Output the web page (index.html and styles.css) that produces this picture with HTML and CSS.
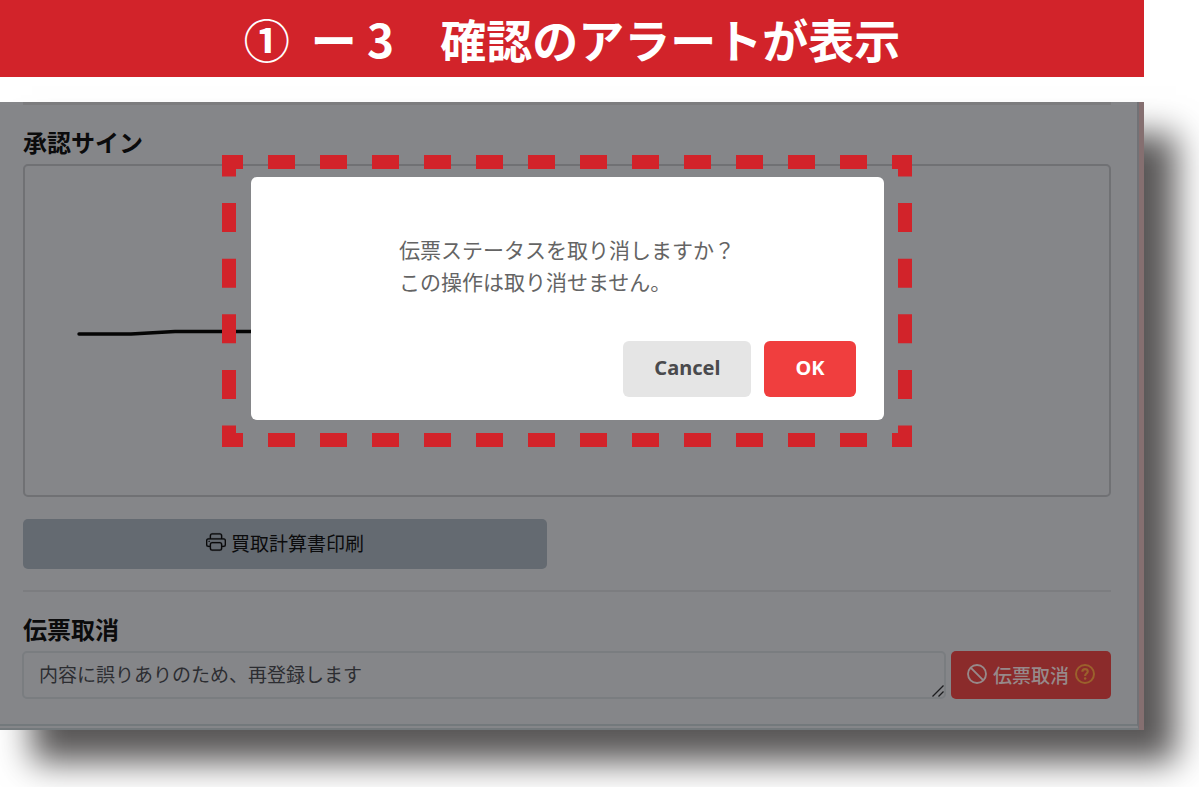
FILE: index.html
```html
<!DOCTYPE html>
<html lang="ja">
<head>
    <meta charset="UTF-8">
    <meta name="viewport" content="width=device-width, initial-scale=1.0">
    <title>確認のアラートが表示</title>
    <link rel="stylesheet" href="styles.css">
</head>
<body>
    <h1 class="banner">①&nbsp; ー 3　確認のアラートが表示</h1>
    <main class="screen">
        <div class="page">
            <div class="prev-section"></div>
            <h2 class="section-title">承認サイン</h2>
            <div class="sign-box">
                <svg class="sign" viewBox="0 0 240 12" fill="none" stroke="#050505" stroke-width="3.4" stroke-linecap="round" stroke-linejoin="round">
                    <path d="M2 7H54L98 4.500H238"/>
                </svg>
            </div>
            <button type="button" class="print-button">
                <svg class="icon" viewBox="0 0 16 16" fill="currentColor" stroke="currentColor" stroke-width=".15">
                    <path d="M2.500 8a.5.5 0 1 0 0-1 .5.5 0 0 0 0 1z"/>
                    <path d="M5 1a2 2 0 0 0-2 2v2H2a2 2 0 0 0-2 2v3a2 2 0 0 0 2 2h1v1a2 2 0 0 0 2 2h6a2 2 0 0 0 2-2v-1h1a2 2 0 0 0 2-2V7a2 2 0 0 0-2-2h-1V3a2 2 0 0 0-2-2H5zM4 3a1 1 0 0 1 1-1h6a1 1 0 0 1 1 1v2H4V3zm1 5a2 2 0 0 0-2 2v1H2a1 1 0 0 1-1-1V7a1 1 0 0 1 1-1h12a1 1 0 0 1 1 1v3a1 1 0 0 1-1 1h-1v-1a2 2 0 0 0-2-2H5zm7 2v3a1 1 0 0 1-1 1H5a1 1 0 0 1-1-1v-3a1 1 0 0 1 1-1h6a1 1 0 0 1 1 1z"/>
                </svg>
                買取計算書印刷
            </button>
            <hr class="divider">
            <h2 class="section-title"><label for="reason">伝票取消</label></h2>
            <div class="cancel-row">
                <div class="reason-field">
                    <textarea id="reason" class="reason" rows="1">内容に誤りありのため、再登録します</textarea>
                    <svg class="grip" viewBox="0 0 12 12" fill="none" stroke="#1c1c1e" stroke-width="1.300">
                        <path d="M.5 11.500L11.500.5M6.500 11.500L11.500 6.500"/>
                    </svg>
                </div>
                <button type="button" class="void-button">
                    <svg class="icon" viewBox="0 0 16 16" fill="none" stroke="currentColor" stroke-width="1.500">
                        <circle cx="8" cy="8" r="7.200"/>
                        <path d="M2.900 2.900l10.200 10.200"/>
                    </svg>
                    伝票取消
                    <svg class="icon help" viewBox="0 0 16 16" fill="none" stroke="currentColor" stroke-width="1.600">
                        <circle cx="8" cy="8" r="7.200"/>
                        <path d="M5.900 6.200C5.900 4.800 6.800 4.100 8 4.100s2.200.7 2.200 1.900c0 1.600-2.100 1.700-2.100 3.500" stroke-width="1.700"/>
                        <circle cx="8.100" cy="11.600" r="1" fill="currentColor" stroke="none"/>
                    </svg>
                </button>
            </div>

            <div class="highlight">
                <svg class="dashes" viewBox="0 0 690 292" fill="none" stroke="#d2232a" stroke-width="14">
                    <path stroke-dasharray="27 25" stroke-dashoffset="13" d="M7 7H683M7 285H683"/>
                    <path stroke-dasharray="29 26.600" stroke-dashoffset="14.500" d="M7 7V285M683 7V285"/>
                    <path d="M0 7H14M0 285H14M676 7H690M676 285H690"/>
                </svg>
                <div class="dialog" role="alertdialog" aria-labelledby="message">
                    <p id="message" class="message">伝票ステータスを取り消しますか？<br>この操作は取り消せません。</p>
                    <div class="actions">
                        <button type="button" class="dialog-button">Cancel</button>
                        <button type="button" class="dialog-button ok">OK</button>
                    </div>
                </div>
            </div>
        </div>
    </main>
</body>
</html>
```

FILE: styles.css
```css
* {
    box-sizing: border-box;
}
body {
    margin: 0;
    min-height: 100vh;
    padding-right: 55px;
    background-color: #ffffff;
    font-family: "Noto Sans CJK JP", sans-serif;
    font-size: 19px;
    color: #0b0b0c;
}
button, textarea {
    font: inherit;
}
.banner {
    margin: 0 0 25px;
    padding: 8px 0 9px;
    background-color: #d2232a;
    color: #ffffff;
    font-size: 46px;
    font-weight: 700;
    line-height: 60px;
    text-align: center;
}
.screen {
    padding-right: 5px;
    background-color: #856f70;
    box-shadow: 32px 32px 32px #595757;
}
.page {
    position: relative;
    padding: 0 26px 25px 23px;
    background-color: #858689;
    border-right: 2px solid #717276;
    border-bottom: 6px double #73797c;
}
.prev-section {
    height: 3px;
    background-color: #7c7c7e;
}
.section-title {
    margin: 0;
    padding: 19px 0 5px;
    font-size: 24px;
    font-weight: 700;
    line-height: 35px;
}
.sign-box {
    height: 333px;
    padding: 161px 0 0 52px;
    border: 2px solid #707174;
    border-radius: 5px;
}
.sign {
    display: block;
    width: 240px;
    height: 12px;
}
.icon {
    width: 20px;
    height: 20px;
    flex: none;
}
.print-button {
    display: flex;
    align-items: center;
    justify-content: center;
    gap: 5px;
    width: calc(50% - 20px);
    height: 50px;
    margin: 22px 0 21px;
    border: none;
    border-radius: 5px;
    background-color: #646a71;
    color: #0b0b0c;
    padding: 0 0 4px;
}
.divider {
    height: 2px;
    margin: 0;
    border: none;
    background-color: #7c7d80;
}
.cancel-row {
    display: flex;
    gap: 5px;
    margin-left: -1px;
}
.reason-field {
    position: relative;
    flex: 1;
}
.reason {
    display: block;
    width: 100%;
    height: 48px;
    padding: 7px 15px;
    border: 2px solid #7a7d80;
    border-radius: 5px;
    background-color: transparent;
    color: #2c2d31;
    line-height: 28px;
    resize: none;
}
.grip {
    position: absolute;
    right: 2px;
    bottom: 2px;
    width: 12px;
    height: 12px;
}
.void-button {
    display: flex;
    align-items: center;
    gap: 6px;
    height: 48px;
    padding: 0 16px 2px;
    border: none;
    border-radius: 5px;
    background-color: #8b2b2b;
    color: #97898a;
    font-weight: 500;
}
.help {
    color: #9b612c;
}
.highlight {
    position: absolute;
    top: 53px;
    left: 50%;
    width: 690px;
    margin-left: -347px;
    padding: 22px 28px 27px 29px;
}
.dashes {
    position: absolute;
    inset: 0;
    width: 100%;
    height: 100%;
}
.dialog {
    position: relative;
    padding: 56px 28px 23px;
    border-radius: 6px;
    background-color: #ffffff;
}
.message {
    width: fit-content;
    margin: 0 auto 44px;
    color: #646464;
    font-size: 21px;
    font-weight: 400;
    line-height: 32px;
}
.actions {
    display: flex;
    justify-content: flex-end;
    gap: 13px;
}
.dialog-button {
    height: 56px;
    padding: 0 31px 4px;
    border: none;
    border-radius: 6px;
    background-color: #e5e5e5;
    color: #4a4a4d;
    font-family: "Noto Sans", sans-serif;
    font-size: 20px;
    font-weight: 700;
}
.dialog-button.ok {
    background-color: #f03e3e;
    color: #ffffff;
}
```
